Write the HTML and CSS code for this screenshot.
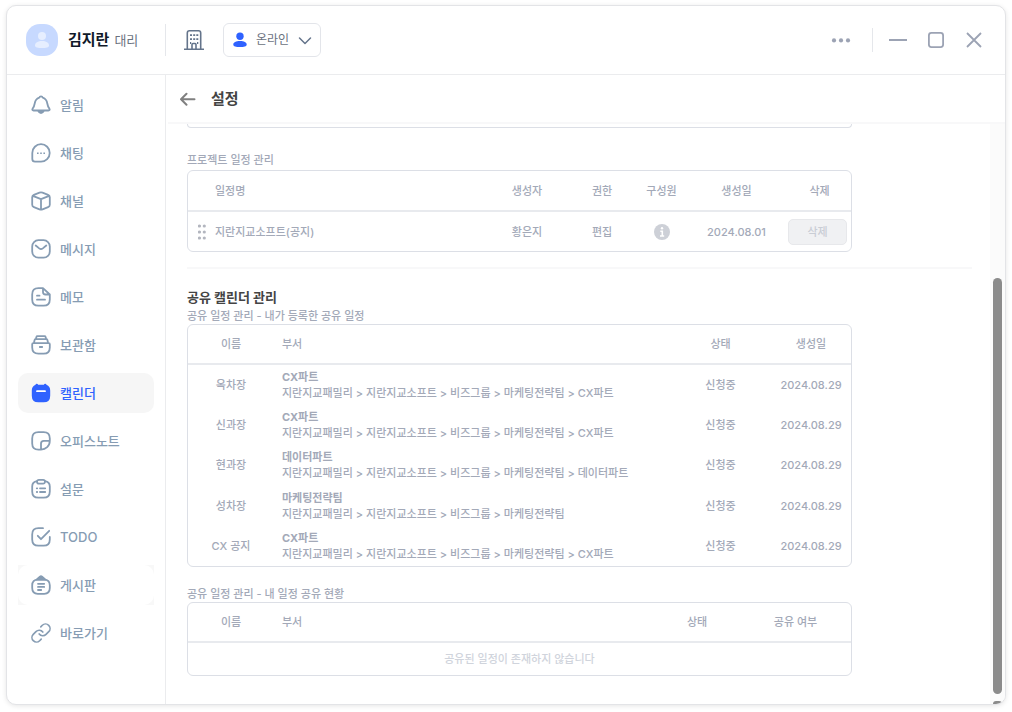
FILE: index.html
```html
<!DOCTYPE html>
<html lang="ko">
<head>
<meta charset="utf-8">
<title>설정</title>
<link rel="stylesheet" href="styles.css">
</head>
<body>
<div class="window">
  <header class="topbar">
    <div class="profile">
      <svg class="avatar" width="32" height="32" viewBox="0 0 32 32"><rect width="32" height="32" rx="14" fill="#c7d9ff"/><circle cx="16" cy="12" r="4" fill="#e6eeff"/><path d="M9 21.500c0-2.800 3-4.500 7-4.500s7 1.700 7 4.500c0 2-3 2.500-7 2.500s-7-.5-7-2.500z" fill="#e6eeff"/></svg>
      <strong class="profile-name">김지란</strong>
      <span class="profile-rank">대리</span>
    </div>
    <button class="icon-button building" aria-label="조직도">
      <svg width="20" height="20" viewBox="0 0 20 20" fill="none" stroke="#64748b" stroke-width="1.600"><path d="M0 19.200h20M3.300 19V3q0-2.200 2.200-2.200h9Q16.700.8 16.700 3v16M8 19v-4.500q0-1 1-1h2q1 0 1 1V19"/><path d="M6 5.200h2M9.200 5.200h2M12.300 5.200h2M6 9.200h2M9.200 9.200h2M12.300 9.200h2M6 13h1.200M13 13h1.300" stroke-width="1.800"/></svg>
    </button>
    <button class="status">
      <svg width="14" height="16" viewBox="0 0 14 16" fill="#2f62ff"><circle cx="7" cy="4.300" r="3.700"/><path d="M.3 12.400C.3 10.200 3 8.900 7 8.900s6.700 1.300 6.700 3.500c0 2-2.700 2.600-6.700 2.600s-6.700-.6-6.700-2.600z"/></svg>
      <span>온라인</span>
      <svg width="14" height="14" viewBox="0 0 14 14" fill="none" stroke="#64748b" stroke-width="1.500" stroke-linecap="round" stroke-linejoin="round"><path d="M1.500 5 7 10.500 12.500 5"/></svg>
    </button>
    <div class="controls">
      <button class="icon-button" aria-label="더보기"><svg width="20" height="20" viewBox="0 0 20 20" fill="#9ca3b4"><circle cx="3" cy="10.400" r="2.100"/><circle cx="10" cy="10.400" r="2.100"/><circle cx="17" cy="10.400" r="2.100"/></svg></button>
      <span class="separator"></span>
      <button class="icon-button" aria-label="최소화"><svg width="20" height="20" viewBox="0 0 20 20" stroke="#9ca3b4" stroke-width="1.800"><path d="M1 10h18"/></svg></button>
      <button class="icon-button" aria-label="최대화"><svg width="20" height="20" viewBox="0 0 20 20" fill="none" stroke="#9ca3b4" stroke-width="1.800"><rect x="2.900" y="2.900" width="14.200" height="14.200" rx="2.500"/></svg></button>
      <button class="icon-button" aria-label="닫기"><svg width="20" height="20" viewBox="0 0 20 20" stroke="#9ca3b4" stroke-width="1.800"><path d="m3 3 14 14M17 3 3 17"/></svg></button>
    </div>
  </header>
  <div class="body">
    <nav class="sidebar">
      <ul class="menu">
        <li><a class="menu-link" href="#"><svg class="menu-icon" viewBox="0 0 20 20"><path d="M8.200 2.700a1.900 1.900 0 0 1 3.600 0c2.800 1 4.100 3.300 4.500 5.800.3 1.900.8 3.300 2 5 .8 1.200.4 2-.9 2H2.600c-1.300 0-1.700-.8-.9-2 1.200-1.700 1.700-3.100 2-5 .4-2.500 1.700-4.800 4.500-5.800z"/><path d="M7.200 15.800c.6 1.700 1.500 2.300 2.800 2.300s2.200-.6 2.800-2.300z" fill="#869cb3"/></svg>알림</a></li>
        <li><a class="menu-link" href="#"><svg class="menu-icon" viewBox="0 0 20 20"><path d="M10 1.200a8.700 8.700 0 0 1 0 17.400H4Q1.300 18.600 1.300 16V9.900A8.700 8.700 0 0 1 10 1.200z"/><path d="M6 10.200h1.600M9.200 10.200h1.600M12.400 10.200H14" stroke-width="1.600" stroke-linecap="butt"/></svg>채팅</a></li>
        <li><a class="menu-link" href="#"><svg class="menu-icon" viewBox="0 0 20 20"><path d="M8.500 1.600q1.500-.6 3 0l5.600 2.200q1.700.7 1.700 2.400v7.600q0 1.700-1.700 2.400l-5.600 2.200q-1.500.6-3 0l-5.600-2.200q-1.700-.7-1.700-2.400V6.200q0-1.700 1.700-2.400zM1.800 4.800 10 8.200l8.200-3.400M10 8.200v10.500"/></svg>채널</a></li>
        <li><a class="menu-link" href="#"><svg class="menu-icon" viewBox="0 0 20 20"><rect x="1.200" y="1.200" width="17.600" height="17.400" rx="6.200"/><path d="m4.700 6.500 3.500 2.900q1.800 1.400 3.600 0l3.500-2.900"/></svg>메시지</a></li>
        <li><a class="menu-link" href="#"><svg class="menu-icon" viewBox="0 0 20 20"><path d="M12 1.200H7.400Q1.200 1.200 1.200 7.400v5q0 6.200 6.200 6.200h5.200q6.200 0 6.200-6.200V7.500zM12 1.400V5q0 2.500 2.500 2.500h4M6 8.700h2.500M6 12.700h8"/></svg>메모</a></li>
        <li><a class="menu-link" href="#"><svg class="menu-icon" viewBox="0 0 20 20"><path d="M4.800 4.200 5.400 2q.2-.8 1.100-.8h7q.9 0 1.100.8l.6 2.200M2.900 8l.7-3q.2-.8 1-.8h10.800q.8 0 1 .8l.7 3M2.200 8.200h15.600q1 0 1 1v3.200q0 6.200-6.200 6.200H7.400q-6.200 0-6.200-6.200V9.200q0-1 1-1zM8.800 12h2.400"/></svg>보관함</a></li>
        <li><a class="menu-link active" href="#"><svg class="menu-icon" viewBox="0 0 20 20"><path d="M5.800.8q1 0 1.300.9h5.800q.3-.9 1.300-.9 1 0 1.300 1 3.700 1.400 3.700 5.700v5.200q0 6.600-6.600 6.600H7.400Q.8 19.300.8 12.700V7.500q0-4.300 3.700-5.700.3-1 1.300-1z" fill="#2f62ff" stroke="none"/><path d="M6 8.200h8" stroke="#fff" stroke-width="1.800"/></svg>캘린더</a></li>
        <li><a class="menu-link" href="#"><svg class="menu-icon" viewBox="0 0 20 20"><path d="M10 18.600H7.400q-6.200 0-6.200-6.200v-5q0-6.200 6.200-6.200h5.200q6.200 0 6.200 6.200v2.400q0 4-2.600 6.400-2.500 2.400-6.200 2.400zM10 18.600v-6q0-2.800 2.800-2.800h6"/></svg>오피스노트</a></li>
        <li><a class="menu-link" href="#"><svg class="menu-icon" viewBox="0 0 20 20"><path d="M6 2.200q-4.800.8-4.800 5.200v5q0 6.200 6.200 6.200h5.200q6.200 0 6.200-6.200v-5q0-4.400-4.800-5.200"/><rect x="6" y=".9" width="8" height="3.800" rx="1.900"/><path d="M5.800 9.300h.4M5.800 13h.4M9 9.300h5.200M9 13h5.200"/></svg>설문</a></li>
        <li><a class="menu-link" href="#"><svg class="menu-icon" viewBox="0 0 20 20"><path d="M12 1.200H7.400Q1.200 1.200 1.200 7.400v5q0 6.200 6.200 6.200h5.200q6.200 0 6.200-6.200V10M6.800 8.800l3.200 3.400 8.200-8.400"/></svg>TODO</a></li>
        <li class="hovered"><a class="menu-link" href="#"><svg class="menu-icon" viewBox="0 0 20 20"><path d="M6.800 4.700h6.400q5.600 0 5.600 5.600v2.800q0 5.700-5.600 5.700H6.800q-5.600 0-5.600-5.700v-2.800q0-5.600 5.600-5.600z"/><path d="m5.500 4.700 3.400-3q1.100-1 2.200 0l3.400 3z" fill="#869cb3"/><path d="M7 8.800h6.200M7 11.900h6.200M7 15h3.200"/></svg>게시판</a></li>
        <li><a class="menu-link" href="#"><svg class="menu-icon" viewBox="1 1 22 22" stroke-width="1.900"><path d="M10 13a5 5 0 0 0 7.540.54l3-3a5 5 0 0 0-7.070-7.070l-1.720 1.710M14 11a5 5 0 0 0-7.540-.54l-3 3a5 5 0 0 0 7.070 7.070l1.710-1.710"/></svg>바로가기</a></li>
      </ul>
    </nav>
    <main class="main">
      <div class="page-head">
        <button class="icon-button" aria-label="뒤로"><svg width="16" height="16" viewBox="0 0 16 16" fill="none" stroke="#808080" stroke-width="2" stroke-linecap="round" stroke-linejoin="round"><path d="M14.500 8.200H1M6.500 2.700 1 8.200l5.500 5.500"/></svg></button>
        <h1 class="page-title">설정</h1>
      </div>
      <div class="viewport">
        <div class="content">
          <div class="card-end"></div>
          <section class="project">
            <h3 class="label" id="project-label">프로젝트 일정 관리</h3>
            <table class="grid-table project-table" aria-labelledby="project-label">
              <thead><tr><th class="grip-col"></th><th class="left">일정명</th><th class="owner-col">생성자</th><th class="role-col">권한</th><th class="member-col">구성원</th><th class="created-col">생성일</th><th class="delete-col">삭제</th></tr></thead>
              <tbody><tr>
                <td><svg width="8" height="16" viewBox="0 0 8 16" fill="#b3b6bf"><circle cx="1.500" cy="2" r="1.600"/><circle cx="6.300" cy="2" r="1.600"/><circle cx="1.500" cy="8" r="1.600"/><circle cx="6.300" cy="8" r="1.600"/><circle cx="1.500" cy="14" r="1.600"/><circle cx="6.300" cy="14" r="1.600"/></svg></td>
                <td class="left">지란지교소프트(공지)</td><td>황은지</td><td>편집</td>
                <td><svg width="16" height="16" viewBox="0 0 16 16"><circle cx="8" cy="8" r="8" fill="#cdd0d7"/><circle cx="8" cy="4.300" r="1.200" fill="#fff"/><path d="M6.300 7.300h2v4.400M6 12h4.200" fill="none" stroke="#fff" stroke-width="1.600"/></svg></td>
                <td>2024.08.01</td><td class="left"><button class="delete" disabled>삭제</button></td>
              </tr></tbody>
            </table>
          </section>
          <hr class="rule">
          <h2 class="section-title">공유 캘린더 관리</h2>
          <section class="shared">
            <h3 class="label" id="mine-label">공유 일정 관리 - 내가 등록한 공유 일정</h3>
            <table class="grid-table shared-table" aria-labelledby="mine-label">
              <thead><tr><th class="name-col">이름</th><th class="dept">부서</th><th class="state-col">상태</th><th class="date-col">생성일</th></tr></thead>
              <tbody>
                <tr><td>옥차장</td><td class="dept"><strong>CX파트</strong><br>지란지교패밀리 &gt; 지란지교소프트 &gt; 비즈그룹 &gt; 마케팅전략팀 &gt; CX파트</td><td>신청중</td><td>2024.08.29</td></tr>
                <tr><td>신과장</td><td class="dept"><strong>CX파트</strong><br>지란지교패밀리 &gt; 지란지교소프트 &gt; 비즈그룹 &gt; 마케팅전략팀 &gt; CX파트</td><td>신청중</td><td>2024.08.29</td></tr>
                <tr><td>현과장</td><td class="dept"><strong>데이터파트</strong><br>지란지교패밀리 &gt; 지란지교소프트 &gt; 비즈그룹 &gt; 마케팅전략팀 &gt; 데이터파트</td><td>신청중</td><td>2024.08.29</td></tr>
                <tr><td>성차장</td><td class="dept"><strong>마케팅전략팀</strong><br>지란지교패밀리 &gt; 지란지교소프트 &gt; 비즈그룹 &gt; 마케팅전략팀</td><td>신청중</td><td>2024.08.29</td></tr>
                <tr><td>CX 공지</td><td class="dept"><strong>CX파트</strong><br>지란지교패밀리 &gt; 지란지교소프트 &gt; 비즈그룹 &gt; 마케팅전략팀 &gt; CX파트</td><td>신청중</td><td>2024.08.29</td></tr>
              </tbody>
            </table>
          </section>
          <section class="received">
            <h3 class="label" id="received-label">공유 일정 관리 - 내 일정 공유 현황</h3>
            <table class="grid-table received-table" aria-labelledby="received-label">
              <thead><tr><th class="name-col">이름</th><th class="dept">부서</th><th class="share-state-col">상태</th><th class="share-col">공유 여부</th></tr></thead>
              <tbody><tr><td class="empty" colspan="4">공유된 일정이 존재하지 않습니다</td></tr></tbody>
            </table>
          </section>
        </div>
        <div class="scrollbar"><div class="thumb"></div><div class="thumb-end"></div></div>
      </div>
    </main>
  </div>
</div>
</body>
</html>
```
FILE: styles.css
```css
* {
  box-sizing: border-box;
}

body {
  display: flex;
  height: 100vh;
  margin: 0;
  padding: 5px 6px 7px;
  background: #fff;
  color: #a3a9b8;
  font: 500 11px/16px Inter, "Noto Sans CJK KR", sans-serif;
}

h1, h2, h3, ul {
  margin: 0;
  padding: 0;
}

button {
  margin: 0;
  font: inherit;
}

svg {
  display: block;
}

.window {
  display: flex;
  flex: 1;
  flex-direction: column;
  overflow: hidden;
  border: 1px solid #e3e4e7;
  border-radius: 10px;
  background: #fff;
  box-shadow: 0 1px 5px rgba(0, 0, 0, 0.1);
}

/* Top bar */

.topbar {
  display: flex;
  align-items: center;
  height: 69px;
  padding: 0 21px 0 19px;
  border-bottom: 1px solid #ebecee;
}

.profile {
  display: flex;
  align-items: center;
  width: 140px;
  height: 32px;
  border-right: 1px solid #e5e7eb;
}

.profile-name {
  margin: 0 5px 0 10px;
  color: #101828;
  font-size: 15px;
  font-weight: 700;
}

.profile-rank {
  color: #6b7280;
  font-size: 13px;
  font-weight: 400;
}

.icon-button {
  padding: 0;
  border: 0;
  background: none;
}

.building {
  margin: 0 19px 0 18px;
}

.status {
  display: flex;
  align-items: center;
  gap: 9px;
  height: 34px;
  padding: 0 8px 0 9px;
  border: 1px solid #e3e5ea;
  border-radius: 6px;
  background: #fff;
  color: #6b7280;
  font-size: 12px;
  font-weight: 400;
  line-height: 18px;
}

.controls {
  display: flex;
  align-items: center;
  gap: 18px;
  margin-left: auto;
}

.separator {
  width: 1px;
  height: 24px;
  margin: 0 -3px 0 3px;
  background: #e5e7eb;
}

/* Sidebar */

.body {
  display: flex;
  flex: 1;
  min-height: 0;
}

.sidebar {
  width: 159px;
  padding: 10px 11px;
  border-right: 1px solid #ebecee;
}

.menu {
  display: grid;
  gap: 8px;
  list-style: none;
}

.menu-link {
  display: flex;
  align-items: center;
  gap: 9px;
  height: 40px;
  padding: 0 13px;
  border-radius: 10px;
  color: #869cb3;
  font-size: 13px;
  text-decoration: none;
}

.menu-icon {
  width: 20px;
  height: 20px;
  fill: none;
  stroke: #869cb3;
  stroke-width: 1.8;
  stroke-linecap: round;
  stroke-linejoin: round;
}

.menu-link.active {
  background: #f6f6f6;
  color: #2f62ff;
}

.hovered {
  background: #f8f8f8;
}

.hovered .menu-link {
  background: #fff;
}

/* Main area */

.main {
  display: flex;
  flex: 1;
  flex-direction: column;
  min-width: 0;
}

.page-head {
  display: flex;
  align-items: center;
  gap: 15px;
  height: 49px;
  margin-left: 2px;
  padding-left: 12px;
  border-bottom: 2px solid #f8f8f9;
}

.page-title {
  color: #444;
  font-size: 15px;
  font-weight: 700;
}

.viewport {
  display: flex;
  flex: 1;
  min-height: 0;
}

.content {
  flex: 1;
  overflow: hidden;
  padding: 0 18px 0 21px;
}

.card-end {
  max-width: 665px;
  height: 4px;
  border: 1px solid #dcdfe6;
  border-top: 0;
  border-radius: 0 0 5px 5px;
}

.project {
  padding-top: 24px;
}

.label {
  font-size: 11px;
  font-weight: 500;
}

.grid-table {
  width: 100%;
  max-width: 665px;
  margin-top: 2px;
  border: 1px solid #dcdfe6;
  border-radius: 6px;
  border-spacing: 0;
  table-layout: fixed;
}

.grid-table th {
  height: 41px;
  padding: 0;
  border-bottom: 2px solid #e8eaee;
  font-weight: 500;
}

.grid-table td {
  height: 40px;
  padding: 0;
  text-align: center;
}

.project-table td {
  height: 39px;
}

.grid-table td svg {
  margin: 0 auto;
}

.grid-table .left {
  text-align: left;
}

.grid-table .dept {
  padding-left: 8px;
  text-align: left;
}

.dept strong {
  font-weight: 700;
}

.grip-col { width: 27px; }
.owner-col { width: 78px; }
.role-col { width: 72px; }
.member-col { width: 47px; }
.created-col { width: 103px; }
.delete-col { width: 63px; }
.name-col { width: 86px; }
.state-col { width: 101px; }
.date-col { width: 80px; }
.share-state-col { width: 86px; }
.share-col { width: 111px; }

.delete {
  display: block;
  width: 59px;
  height: 26px;
  padding: 0;
  border: 1px solid #e7e8eb;
  border-radius: 5px;
  background: #f0f1f3;
  color: #c9cdd5;
}

.rule {
  height: 2px;
  margin: 15px 0 20px;
  border: 0;
  background: #f8f8f9;
}

.section-title {
  color: #444;
  font-size: 13px;
  font-weight: 700;
  line-height: 16px;
}

.shared {
  padding-top: 4px;
}

.shared .label,
.received .label {
  line-height: 15px;
}

.shared .grid-table,
.received .grid-table {
  margin-top: 0;
}

.shared-table {
  height: 243px;
}

.shared-table th,
.received-table th {
  height: 40px;
}

.received {
  padding-top: 20px;
}

.received-table td {
  height: 32px;
}

.grid-table .empty {
  color: #d0d4dc;
}

/* Scrollbar */

.scrollbar {
  display: flex;
  flex-direction: column;
  width: 15px;
  padding: 154px 3px 0;
  background: #fbfbfb;
}

.thumb {
  flex: 1;
  border-radius: 5px;
  background: #8b8b8b;
}

.thumb-end {
  height: 3px;
  margin-top: 7px;
  border-radius: 3px 3px 0 0;
  background: #8b8b8b;
}
```
